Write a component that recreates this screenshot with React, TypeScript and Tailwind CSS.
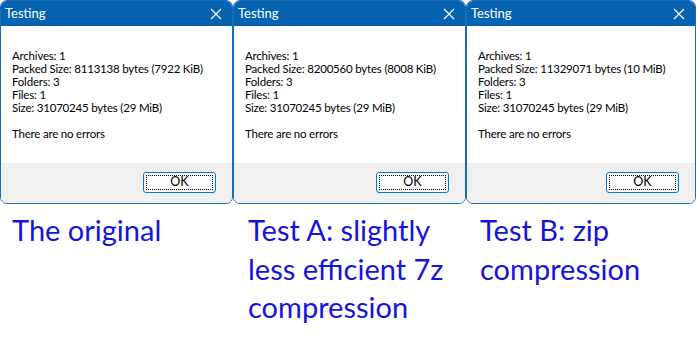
const dialogs = [
  { packed: "8113138 bytes (7922 KiB)", width: "w-[233px]", pad: "pl-[12px]", caption: ["The original"] },
  { packed: "8200560 bytes (8008 KiB)", width: "w-[233px]", pad: "pl-[15px]", caption: ["Test A: slightly", "less efficient 7z", "compression"] },
  { packed: "11329071 bytes (10 MiB)", width: "w-[230px]", pad: "pl-[14px]", caption: ["Test B: zip", "compression"] },
];

function CloseIcon() {
  return (
    <svg width="12" height="12" viewBox="0 0 12 12" className="block">
      <path d="M1 1 L11 11 M11 1 L1 11" stroke="white" strokeWidth="1.1" fill="none" />
    </svg>
  );
}

function Dialog({ packed }: { packed: string }) {
  return (
    <div className="flex h-[204px] flex-col overflow-hidden rounded-[7px] border border-[#1a6db5] bg-white font-['Lato',sans-serif] text-black">
      <div className="flex h-[25px] items-center justify-between bg-[#0563b0] pl-[4px] pr-[10px] text-[13px] text-white">
        <span className="leading-none">Testing</span>
        <CloseIcon />
      </div>
      <div className="flex-1 pl-[11px] pt-[23px] text-[11.5px] leading-[13px] tracking-[-0.2px]">
        <div>Archives: 1</div>
        <div>Packed Size: {packed}</div>
        <div>Folders: 3</div>
        <div>Files: 1</div>
        <div>Size: 31070245 bytes (29 MiB)</div>
        <div className="mt-[13px]">There are no errors</div>
      </div>
      <div className="flex h-[40px] items-start justify-end bg-[#f0f0f0] pr-[16px] pt-[9px] text-[12.5px]">
        <div className="flex h-[21px] w-[73px] items-center justify-center rounded-[3px] border border-[#0078d7] bg-[#fdfdfd] p-[2px]">
          <div className="flex h-full w-full items-center justify-center border border-dotted border-black leading-none">
            OK
          </div>
        </div>
      </div>
    </div>
  );
}

export default function App() {
  return (
    <div className="flex h-[348px] w-[696px] bg-white">
      {dialogs.map((d, i) => (
        <div key={i} className={`${d.width} flex flex-col`}>
          <Dialog packed={d.packed} />
          <div className={`${d.pad} pt-[7px] font-['Lato',sans-serif] text-[29px] leading-[38.5px] text-[#1414dc]`}>
            {d.caption.map((line) => (
              <div key={line}>{line}</div>
            ))}
          </div>
        </div>
      ))}
    </div>
  );
}
